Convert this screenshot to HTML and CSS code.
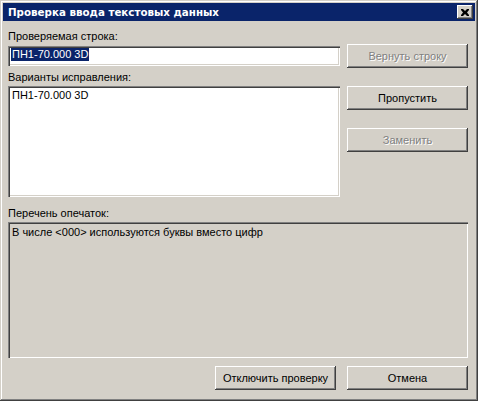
FILE: index.html
```html
<!DOCTYPE html>
<html lang="ru">
<head>
<meta charset="utf-8">
<title>Проверка ввода текстовых данных</title>
<link rel="stylesheet" href="styles.css">
</head>
<body>
<div class="window">
  <div class="titlebar">
    <span class="title">Проверка ввода текстовых данных</span>
    <span class="close">
      <svg width="8" height="7" viewBox="0 0 8 7"><path d="M0 0h2l2 2 2-2h2v1L6 3.5 8 6v1H6L4 5 2 7H0V6l2-2.5L0 1z" fill="#000"/></svg>
    </span>
  </div>
  <div class="dialog">
    <div class="label l1">Проверяемая строка:</div>
    <div class="edit"><span class="sel">ПН1-70.000 3D</span></div>
    <div class="btn disabled b-return">Вернуть строку</div>
    <div class="label l2">Варианты исправления:</div>
    <div class="listbox"><div class="item">ПН1-70.000 3D</div></div>
    <div class="side">
      <div class="btn">Пропустить</div>
      <div class="btn disabled">Заменить</div>
    </div>
    <div class="label l3">Перечень опечаток:</div>
    <div class="errors">В числе &lt;000&gt; используются буквы вместо цифр</div>
    <div class="footer">
      <div class="btn">Отключить проверку</div>
      <div class="btn">Отмена</div>
    </div>
  </div>
</div>
</body>
</html>
```

FILE: styles.css
```css
* { box-sizing: border-box; }
html, body { margin: 0; padding: 0; }
body {
  width: 478px;
  height: 401px;
  overflow: hidden;
  font-family: "Liberation Sans", Arial, sans-serif;
  font-size: 11px;
  color: #000;
  background: #d4d0c8;
}
.window {
  width: 478px;
  height: 401px;
  padding: 3px;
  background: #d4d0c8;
  box-shadow: inset -1px -1px #404040, inset 1px 1px #d4d0c8, inset -2px -2px #808080, inset 2px 2px #fff;
}
.titlebar {
  height: 18px;
  background: #0a246a;
  display: flex;
  align-items: flex-start;
  justify-content: space-between;
  padding-left: 5px;
}
.title {
  color: #fff;
  font-family: "DejaVu Sans", sans-serif;
  font-weight: bold;
  font-size: 10.3px;
  line-height: 18px;
}
.close {
  width: 16px;
  height: 14px;
  margin: 2px 2px 0 0;
  background: #d4d0c8;
  box-shadow: inset -1px -1px #404040, inset 1px 1px #fff, inset -2px -2px #808080;
  display: flex;
  align-items: center;
  justify-content: center;
}
.close svg { display: block; margin-left: -1px; }
.dialog {
  display: grid;
  grid-template-columns: 332px 121px;
  column-gap: 7px;
  padding: 9px 7px 0 5px;
}
.label { line-height: 13px; height: 13px; white-space: nowrap; }
.l1 { grid-column: 1; grid-row: 1; }
.edit {
  grid-column: 1; grid-row: 2;
  align-self: center;
  height: 20px;
  background: #fff;
  padding: 1px 0 0 3px;
  box-shadow: inset 1px 1px #808080, inset 2px 2px #404040, inset -1px -1px #fff, inset -2px -2px #d4d0c8;
}
.sel {
  display: inline-block;
  margin-top: 1px;
  background: #0a246a;
  color: #fff;
  line-height: 13px;
  padding: 0 1px;
}
.b-return { grid-column: 2; grid-row: 2; margin-top: 1px; }
.l2 { grid-column: 1; grid-row: 3; margin-top: 3px; }
.listbox {
  grid-column: 1; grid-row: 4;
  margin-top: 2px;
  height: 111px;
  background: #fff;
  padding: 3px 4px;
  box-shadow: inset 1px 1px #808080, inset 2px 2px #404040, inset -1px -1px #fff, inset -2px -2px #d4d0c8;
}
.item { line-height: 13px; }
.side {
  grid-column: 2; grid-row: 4;
  margin-top: 2px;
  display: flex;
  flex-direction: column;
  gap: 18px;
}
.l3 { grid-column: 1 / span 2; grid-row: 5; margin-top: 10px; }
.errors {
  grid-column: 1 / span 2; grid-row: 6;
  margin-top: 2px;
  height: 136px;
  padding: 4px 4px;
  line-height: 13px;
  box-shadow: inset 1px 1px #808080, inset 2px 2px #404040, inset -1px -1px #fff, inset -2px -2px #d4d0c8;
}
.footer {
  grid-column: 1 / span 2; grid-row: 7;
  margin-top: 8px;
  display: flex;
  justify-content: flex-end;
  gap: 11px;
}
.btn {
  width: 121px;
  height: 24px;
  display: flex;
  align-items: center;
  justify-content: center;
  background: #d4d0c8;
  line-height: 13px;
  white-space: nowrap;
  box-shadow: inset -1px -1px #404040, inset 1px 1px #fff, inset -2px -2px #808080;
}
.btn.disabled {
  color: #808080;
  text-shadow: 1px 1px 0 #fff;
}
```
